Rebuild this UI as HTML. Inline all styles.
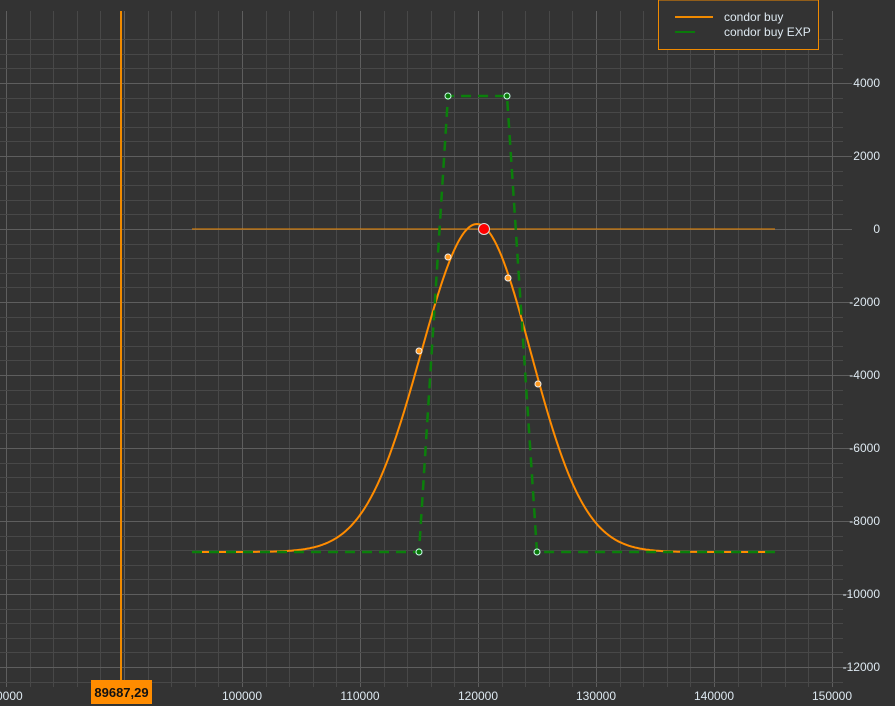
<!DOCTYPE html>
<html><head><meta charset="utf-8"><style>
html,body{margin:0;padding:0;background:#333;width:895px;height:706px;overflow:hidden}
svg{display:block}
text{font-family:"Liberation Sans",sans-serif;font-size:12px;fill:#dde8f0}
</style></head><body>
<svg id="s" width="895" height="706" viewBox="0 0 895 706">
<rect x="0" y="0" width="895" height="706" fill="#333"/>
<g id="grid"></g>
<g id="labels"></g>
<line x1="192" y1="229" x2="775" y2="229" stroke="#f08a00" stroke-width="1"/>
<line x1="121" y1="11" x2="121" y2="690" stroke="#f08a00" stroke-width="2"/>
<path id="curve" fill="none" stroke="#ff8c00" stroke-width="2"/>
<polyline points="192,552 419,552 448,96 507,96 537,552 775,552" fill="none" stroke="#0b800b" stroke-width="2.5" stroke-dasharray="10,7"/>
<g fill="#0a7a0a" stroke="#cfe" stroke-width="1">
<circle cx="448" cy="96" r="3"/><circle cx="507" cy="96" r="3"/><circle cx="419" cy="552" r="3"/><circle cx="537" cy="552" r="3"/>
</g>
<g fill="#ff9a20" stroke="#eee" stroke-width="1">
<circle cx="419" cy="351" r="3"/><circle cx="448" cy="257" r="3"/><circle cx="508" cy="278" r="3"/><circle cx="538" cy="384" r="3"/>
</g>
<circle cx="484" cy="229" r="5.5" fill="#f00" stroke="#ddd" stroke-width="1"/>
<rect x="658.5" y="0" width="160" height="49.5" fill="#333" stroke="#f08a00" stroke-width="1"/>
<line x1="675" y1="17" x2="713" y2="17" stroke="#f08a00" stroke-width="2"/>
<line x1="675" y1="32" x2="695" y2="32" stroke="#0a7a0a" stroke-width="2"/>
<text x="724" y="21">condor buy</text>
<text x="724" y="36">condor buy EXP</text>
<rect x="91" y="680" width="61" height="24" fill="#ff8c00"/>
<text x="121.5" y="697" text-anchor="middle" style="fill:#111;font-weight:bold;font-size:13px">89687,29</text>
</svg>
<script>
var g=document.getElementById('grid'),L=document.getElementById('labels'),ns='http://www.w3.org/2000/svg';
function ln(x1,y1,x2,y2,c){var e=document.createElementNS(ns,'line');e.setAttribute('x1',x1);e.setAttribute('y1',y1);e.setAttribute('x2',x2);e.setAttribute('y2',y2);e.setAttribute('stroke',c);e.setAttribute('stroke-width',1);g.appendChild(e);}
function tx(x,y,t,a){var e=document.createElementNS(ns,'text');e.setAttribute('x',x);e.setAttribute('y',y);if(a)e.setAttribute('text-anchor',a);e.textContent=t;L.appendChild(e);}
for(var i=-1;i<=36;i++){var x=Math.round(6+i*23.6)+0.5;if(x>855||x<0)continue;var maj=(i%5==0);ln(x,11,x,687,maj?'#5e5e5e':'#484848');}
for(var v=-13200;v<=5200;v+=400){var y=Math.round(229-v*73/2000)+0.5;if(y<11||y>687)continue;var maj=(v%2000==0);ln(0,y,maj?852:843,y,maj?'#5e5e5e':'#484848');}
for(var v=-12000;v<=4000;v+=2000){var y=229-v*73/2000;tx(880,y+4,String(v),'end');}
var xs=[80000,90000,100000,110000,120000,130000,140000,150000];
for(var k=0;k<xs.length;k++){var x=6+k*118;if(k==1)continue;tx(x,700,String(xs[k]),'middle');}
var d='';for(var x=192;x<=775;x+=1){var dx=x-477,s=dx<0?56:54;var y=552-328*Math.exp(-dx*dx/(2*s*s));d+=(x==192?'M':'L')+x+','+y.toFixed(1);}
document.getElementById('curve').setAttribute('d',d);
</script>
</body></html>
